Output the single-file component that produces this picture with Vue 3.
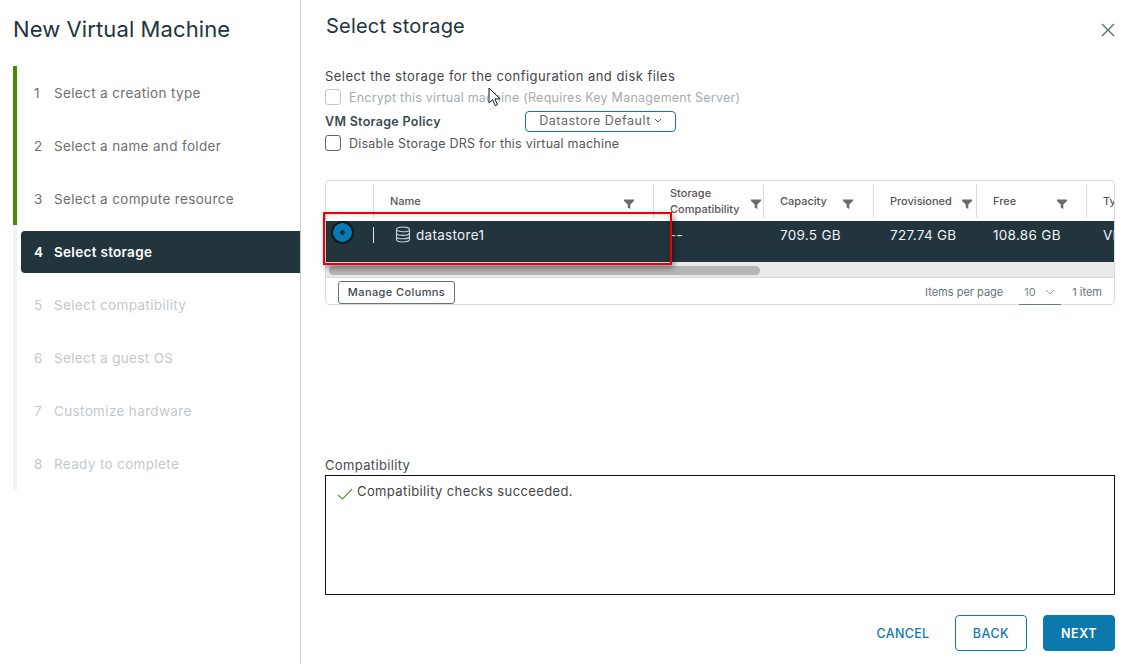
<template>
  <div class="wizard">
    <aside class="side">
      <h1 class="wiz-title">New Virtual Machine</h1>
      <ul class="steps">
        <li
          v-for="s in steps"
          :key="s.n"
          :class="['step', s.state]"
        >
          <div class="step-inner">
            <span class="num">{{ s.n }}</span>
            <span class="label">{{ s.label }}</span>
          </div>
        </li>
      </ul>
    </aside>

    <main class="main">
      <header class="head">
        <h2>Select storage</h2>
        <button class="close" title="Close">
          <svg width="14" height="14" viewBox="0 0 14 14"><path d="M1 1l12 12M13 1L1 13" stroke="#5d6b74" stroke-width="1.4" fill="none" /></svg>
        </button>
      </header>

      <p class="intro">Select the storage for the configuration and disk files</p>
      <label class="check disabled"><span class="box"></span>Encrypt this virtual machine (Requires Key Management Server)</label>
      <div class="policy">
        <span class="policy-label">VM Storage Policy</span>
        <button class="policy-btn">Datastore Default
          <svg width="8" height="5" viewBox="0 0 8 5"><path d="M1 1l3 3 3-3" stroke="#565656" fill="none" /></svg>
        </button>
      </div>
      <label class="check"><span class="box"></span>Disable Storage DRS for this virtual machine</label>

      <section class="grid">
        <div class="grid-head">
          <div class="th" style="width:47px"></div>
          <div v-for="c in columns" :key="c.name" class="th" :style="{ width: c.width + 'px' }">
            <span class="th-name" v-html="c.name"></span>
            <svg v-if="c.filter" class="funnel" :style="{ right: c.filter + 'px' }" width="10" height="10" viewBox="0 0 10 10"><path d="M0 .5h10v1.5L6.3 5.6V10L3.7 8.6V5.6L0 2z" fill="#666c70" /></svg>
          </div>
        </div>
        <div class="grid-row">
          <div class="td radio-cell"><span class="radio"></span></div>
          <div class="td name-cell" style="width:281px">
            <svg class="db" width="16" height="17" viewBox="0 0 16 17" fill="none" stroke="#c9d2d7" stroke-width="1.1">
              <ellipse cx="8" cy="3.4" rx="6.5" ry="2.4" />
              <path d="M1.500 3.400v10.200c0 1.300 2.900 2.400 6.500 2.400s6.500-1.100 6.500-2.400V3.400M1.500 7c0 1.300 2.900 2.400 6.500 2.400s6.500-1.100 6.500-2.400M1.500 10.400c0 1.300 2.900 2.400 6.500 2.400s6.500-1.100 6.500-2.400" />
            </svg>
            datastore1
          </div>
          <div class="td" style="width:110px">--</div>
          <div class="td" style="width:110px">709.5 GB</div>
          <div class="td" style="width:103px">727.74 GB</div>
          <div class="td" style="width:110px">108.86 GB</div>
          <div class="td" style="width:60px">VMFS</div>
        </div>
        <div class="scroll-track"><div class="scroll-thumb"></div></div>
        <div class="grid-foot">
          <button class="manage">Manage Columns</button>
          <div class="pager">
            <span>Items per page</span>
            <span class="per-page">10
              <svg width="10" height="6" viewBox="0 0 10 6"><path d="M1 1l4 4 4-4" stroke="#9aa3a8" fill="none" /></svg>
            </span>
            <span>1 item</span>
          </div>
        </div>
        <div class="red-mark"></div>
      </section>

      <div class="compat-label">Compatibility</div>
      <div class="compat-box">
        <svg width="16" height="12" viewBox="0 0 16 12"><path d="M1 7l4.500 4L15 1" stroke="#5a9a2a" stroke-width="1.1" fill="none" /></svg>
        <span>Compatibility checks succeeded.</span>
      </div>

      <footer class="actions">
        <button class="btn link">CANCEL</button>
        <button class="btn outline">BACK</button>
        <button class="btn solid">NEXT</button>
      </footer>

      <svg class="cursor" width="13" height="20" viewBox="0 0 13 20"><path d="M1 1v15l3.600-3.300 2.600 6 2.300-1-2.600-5.800H12z" fill="#fff" stroke="#1c1c1c" stroke-width="1" /></svg>
    </main>
  </div>
</template>

<script setup>
const steps = [
  { n: 1, label: 'Select a creation type', state: 'done' },
  { n: 2, label: 'Select a name and folder', state: 'done' },
  { n: 3, label: 'Select a compute resource', state: 'done' },
  { n: 4, label: 'Select storage', state: 'active' },
  { n: 5, label: 'Select compatibility', state: 'todo' },
  { n: 6, label: 'Select a guest OS', state: 'todo' },
  { n: 7, label: 'Customize hardware', state: 'todo' },
  { n: 8, label: 'Ready to complete', state: 'todo' }
]

const columns = [
  { name: 'Name', width: 280, filter: 19 },
  { name: 'Storage<br>Compatibility', width: 110, filter: 2 },
  { name: 'Capacity', width: 110, filter: 20 },
  { name: 'Provisioned', width: 103, filter: 4 },
  { name: 'Free', width: 110, filter: 19 },
  { name: 'Type', width: 60, filter: 0 }
]
</script>

<style>
html, body {
  margin: 0;
  background: #fff;
  overflow: hidden;
}
</style>

<style scoped>
.wizard {
  display: flex;
  width: 1128px;
  height: 664px;
  font-family: Inter, "Noto Sans", sans-serif;
  color: #2f3d45;
  overflow: hidden;
}

.side {
  flex: none;
  border-right: 1px solid #c5d0d8;
  padding: 14px 0 0 13px;
  box-sizing: content-box;
  width: 287px;
}

.wiz-title {
  margin: 0 0 22px 0;
  font-size: 22px;
  line-height: 30px;
  font-weight: 400;
  letter-spacing: .1px;
  color: #22343c;
}

.steps {
  list-style: none;
  margin: 0;
  padding: 0 0 1px;
  border-left: 4px solid #eef3f7;
}

.step {
  height: 53px;
  margin-left: -4px;
  border-left: 4px solid transparent;
  display: flex;
  align-items: center;
  font-size: 13.5px;
  letter-spacing: .35px;
}

.step.done {
  border-left-color: #4a8a0a;
  color: #6f6f6f;
}

.step.todo {
  color: #c4c8cb;
}

.step-inner {
  display: flex;
  align-items: center;
  flex: 1;
  height: 42px;
  margin-left: 4px;
  padding-left: 13px;
  border-radius: 4px 0 0 4px;
}

.step.active .step-inner {
  background: #22343c;
  color: #fff;
  font-weight: 600;
  letter-spacing: .3px;
}

.num {
  width: 20px;
}

.main {
  position: relative;
  flex: 1;
  display: flex;
  flex-direction: column;
  padding: 0 13px 0 24px;
  min-width: 0;
}

.head {
  display: flex;
  justify-content: space-between;
  align-items: center;
  height: 52px;
  margin-bottom: 16px;
}

.head h2 {
  margin: 0 0 0 1px;
  font-size: 20px;
  font-weight: 400;
  letter-spacing: .2px;
  color: #22343c;
}

.close {
  border: 0;
  background: none;
  padding: 0;
  width: 14px;
  height: 14px;
  position: relative;
  top: 4px;
}

.intro {
  margin: 0;
  font-size: 13px;
  line-height: 17px;
  letter-spacing: .45px;
  color: #444;
}

.check {
  display: flex;
  align-items: center;
  height: 20px;
  font-size: 12.500px;
  letter-spacing: .23px;
  color: #565656;
}

.check.disabled {
  margin-top: 2px;
  color: #a6acb0;
}

.box {
  width: 14px;
  height: 14px;
  border: 1px solid #5b6770;
  border-radius: 3px;
  margin-right: 8px;
}

.check.disabled .box {
  border-color: #c3c9cd;
}

.policy {
  display: flex;
  align-items: center;
  height: 24px;
  margin-top: 2px;
  font-size: 12.500px;
  font-weight: 600;
}

.policy-label {
  width: 200px;
  letter-spacing: .3px;
  color: #3b4a52;
}

.policy-btn {
  width: 151px;
  height: 21px;
  border: 1px solid #0f79ab;
  border-radius: 4px;
  background: #fff;
  color: #666;
  font: inherit;
  font-weight: 400;
  font-size: 12.500px;
  letter-spacing: .5px;
  padding: 0 0 1px;
  display: flex;
  align-items: center;
  justify-content: center;
  gap: 3px;
}

.grid {
  position: relative;
  width: 790px;
  height: 125px;
  margin-top: 27px;
  box-sizing: border-box;
  border: 1px solid #d7dde1;
  border-radius: 4px;
  overflow: visible;
  font-size: 13.500px;
}

.grid-head {
  display: flex;
  height: 40px;
  padding-top: 3px;
  box-sizing: border-box;
  overflow: hidden;
}

.th {
  position: relative;
  flex: none;
  display: flex;
  align-items: center;
  box-sizing: border-box;
  height: 34px;
  padding-left: 16px;
  font-size: 11px;
  line-height: 16px;
  font-weight: 500;
  color: #565656;
  border-left: 1px solid #d7dde1;
}

.th:first-child {
  border-left: 0;
}

.funnel {
  position: absolute;
  top: 15px;
}

.grid-row {
  display: flex;
  height: 41px;
  background: #22343c;
  color: #eef3f6;
  overflow: hidden;
  letter-spacing: .3px;
}

.td {
  flex: none;
  box-sizing: border-box;
  padding: 6px 0 0 16px;
  line-height: 17px;
}

.radio-cell {
  width: 47px;
  padding: 0;
  position: relative;
}

.radio {
  position: absolute;
  left: 5px;
  top: 0;
  width: 23px;
  height: 23px;
  box-sizing: border-box;
  border-radius: 50%;
  background: radial-gradient(circle, #1b2a33 0 2px, #0779b5 2.500px 9px, #111a20 9.500px);
}

.name-cell {
  display: flex;
  align-items: flex-start;
  gap: 5px;
  padding-left: 22px;
  position: relative;
}

.name-cell::before {
  content: '';
  position: absolute;
  left: 0;
  top: 6px;
  height: 16px;
  width: 1px;
  background: #dfe5e8;
}

.db {
  margin-top: -1px;
}

.scroll-track {
  height: 16px;
  background: #eaeaea;
  border-bottom: 1px solid #d7dde1;
  box-sizing: border-box;
  padding-top: 4px;
}

.scroll-thumb {
  width: 431px;
  height: 9px;
  margin-left: 3px;
  border-radius: 5px;
  background: #b6b6b6;
}

.grid-foot {
  display: flex;
  justify-content: space-between;
  align-items: center;
  height: 26px;
  box-sizing: border-box;
  padding: 2px 12px 0;
  font-size: 11px;
  color: #6b7479;
}

.manage {
  height: 23px;
  width: 117px;
  border: 1px solid #66737a;
  border-radius: 3px;
  background: #fff;
  color: #3f4b52;
  font: inherit;
  font-size: 11px;
  font-weight: 500;
  letter-spacing: .4px;
  padding: 0;
}

.pager {
  display: flex;
  align-items: center;
}

.per-page {
  display: flex;
  align-items: center;
  gap: 9px;
  width: 37px;
  height: 24px;
  margin: 0 11px 0 16px;
  padding-left: 5px;
  border-bottom: 1px solid #6d7a81;
  color: #7b8388;
}

.red-mark {
  position: absolute;
  left: -3px;
  top: 31px;
  width: 349px;
  height: 53px;
  box-sizing: border-box;
  border: 2px solid #e8000b;
  box-shadow: 2px 3px 6px rgba(0, 0, 0, .4), inset 0 0 5px rgba(0, 0, 0, .2);
}

.compat-label {
  margin-top: 152px;
  font-size: 13px;
  line-height: 17px;
  letter-spacing: .35px;
  color: #4a4a4a;
}

.compat-box {
  display: flex;
  gap: 4px;
  width: 790px;
  height: 120px;
  margin-top: 1px;
  padding: 7px 11px;
  box-sizing: border-box;
  border: 1px solid #111;
  font-size: 13px;
  line-height: 17px;
  letter-spacing: .39px;
  color: #444;
}

.compat-box svg {
  margin-top: 5px;
}

.actions {
  display: flex;
  justify-content: flex-end;
  align-items: center;
  width: 790px;
  margin-top: 20px;
  gap: 16px;
}

.btn {
  height: 36px;
  width: 72px;
  padding: 0;
  border-radius: 4px;
  border: 1px solid #0b79ac;
  font: inherit;
  font-size: 12.500px;
  font-weight: 500;
  letter-spacing: .5px;
}

.btn.link {
  border-color: transparent;
  background: none;
  color: #0f79ab;
  letter-spacing: .3px;
}

.btn.outline {
  background: #fff;
  color: #0f79ab;
}

.btn.solid {
  background: #0b79ac;
  color: #fff;
  font-weight: 600;
}

.cursor {
  position: absolute;
  left: 187px;
  top: 87px;
}
</style>
